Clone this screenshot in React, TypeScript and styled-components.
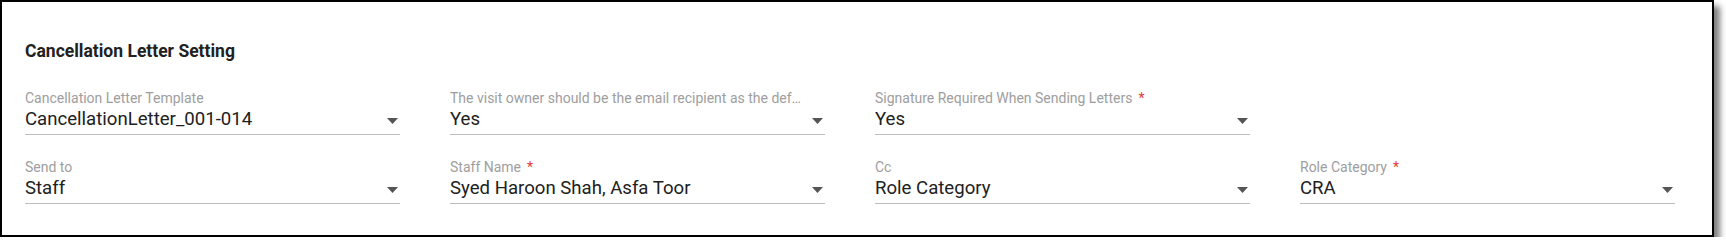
import React from "react";
import styled, { createGlobalStyle } from "styled-components";

const GlobalStyle = createGlobalStyle`
  html, body {
    margin: 0;
    padding: 0;
    background: #ffffff;
  }
  body {
    font-family: Roboto, "Liberation Sans", Arial, sans-serif;
  }
`;

const Panel = styled.section`
  box-sizing: border-box;
  width: 1714px;
  height: 237px;
  border: 2px solid #000000;
  background: #ffffff;
  box-shadow: 6px 6px 6px rgba(0, 0, 0, 0.5);
  padding: 39px 23px 0 23px;
`;

const Heading = styled.h2`
  margin: 0 0 29px 0;
  font-family: Roboto, "Liberation Sans", Arial, sans-serif;
  font-size: 17.5px;
  line-height: 20px;
  font-weight: 700;
  color: #212121;
`;

const Grid = styled.div`
  display: grid;
  grid-template-columns: repeat(4, 375px);
  column-gap: 50px;
  row-gap: 24px;
`;

const Field = styled.div`
  display: flex;
  flex-direction: column;
  min-width: 0;
`;

const Label = styled.label`
  display: block;
  font-size: 14px;
  line-height: 16px;
  color: #9e9e9e;
  white-space: nowrap;
  overflow: hidden;
  text-overflow: ellipsis;
  max-width: 353px;
`;

const Required = styled.span`
  color: #e53935;
  margin-left: 6px;
`;

const Control = styled.div`
  display: flex;
  align-items: center;
  margin-top: 1px;
  padding-bottom: 3px;
  border-bottom: 1px solid #bdbdbd;
`;

const Value = styled.span`
  flex: 1;
  font-size: 18.6px;
  line-height: 24px;
  color: #212121;
  white-space: nowrap;
  overflow: hidden;
  text-overflow: ellipsis;
`;

const Arrow = styled.svg`
  flex: none;
  width: 11px;
  height: 6px;
  margin: 3px 2px 0 0;
  fill: #555555;
`;

type FieldDef = {
  label: string;
  value: string;
  required?: boolean;
};

const fields: (FieldDef | null)[] = [
  { label: "Cancellation Letter Template", value: "CancellationLetter_001-014" },
  {
    label:
      "The visit owner should be the email recipient as the default recipient",
    value: "Yes",
  },
  { label: "Signature Required When Sending Letters", value: "Yes", required: true },
  null,
  { label: "Send to", value: "Staff" },
  { label: "Staff Name", value: "Syed Haroon Shah, Asfa Toor", required: true },
  { label: "Cc", value: "Role Category" },
  { label: "Role Category", value: "CRA", required: true },
];

const SelectField: React.FC<FieldDef> = ({ label, value, required }) => (
  <Field>
    <Label>
      {label}
      {required && <Required>*</Required>}
    </Label>
    <Control>
      <Value>{value}</Value>
      <Arrow viewBox="0 0 11 6" aria-hidden="true">
        <path d="M0 0 L11 0 L5.5 6 Z" />
      </Arrow>
    </Control>
  </Field>
);

export default function App() {
  return (
    <>
      <GlobalStyle />
      <Panel>
        <Heading>Cancellation Letter Setting</Heading>
        <Grid>
          {fields.map((f, i) =>
            f ? <SelectField key={i} {...f} /> : <div key={i} />
          )}
        </Grid>
      </Panel>
    </>
  );
}
